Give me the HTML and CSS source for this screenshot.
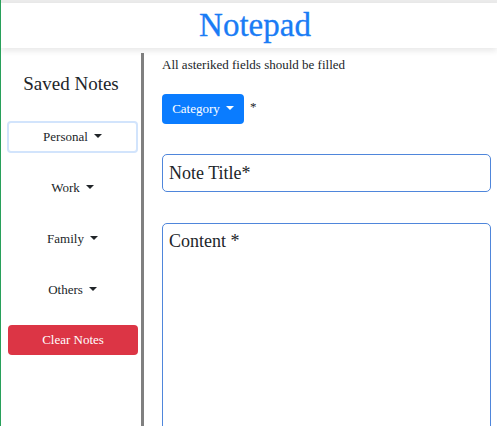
FILE: index.html
```html
<!DOCTYPE html>
<html>
<head>
<meta charset="utf-8">
<link rel="stylesheet" href="styles.css">
</head>
<body>
<div class="page">
  <header class="header"><h1 class="title">Notepad</h1></header>
  <div class="row">
    <aside class="sidebar">
      <h2 class="saved">Saved Notes</h2>
      <div class="cats">
        <button class="side-btn active">Personal<span class="caret"></span></button>
        <button class="side-btn">Work<span class="caret"></span></button>
        <button class="side-btn">Family<span class="caret"></span></button>
        <button class="side-btn">Others<span class="caret"></span></button>
        <button class="clear-btn">Clear Notes</button>
      </div>
    </aside>
    <main class="main">
      <p class="hint">All asteriked fields should be filled</p>
      <div class="cat-row">
        <button class="cat-btn">Category<span class="caret light"></span></button>
        <span class="star">*</span>
      </div>
      <input class="title-input" type="text" placeholder="Note Title*">
      <textarea class="content-input" placeholder="Content *"></textarea>
    </main>
  </div>
</div>
</body>
</html>
```
FILE: styles.css
```css
html, body {
  margin: 0;
  padding: 0;
  background: #fff;
  overflow: hidden;
}
body {
  font-family: "Liberation Serif", "Times New Roman", serif;
  color: #212529;
}
.page {
  border-left: 1px solid #28a05a;
  height: 426px;
  box-sizing: border-box;
  background: #ebebeb;
  padding-top: 3px;
  overflow: hidden;
}
.header {
  position: relative;
  z-index: 2;
  height: 45px;
  background: #fff;
  box-shadow: 0 3px 6px rgba(0,0,0,0.09);
  display: flex;
  align-items: center;
  justify-content: center;
  padding-left: 12px;
}
.title {
  margin: 0;
  font-weight: normal;
  font-size: 33px;
  line-height: 45px;
  color: #1a7cf5;
  -webkit-text-stroke: 0.3px #1a7cf5;
}
.row {
  display: flex;
  background: #fff;
  padding-top: 5px;
  height: 373px;
}
.sidebar {
  width: 140px;
  flex: none;
  border-right: 3px solid #808080;
  box-sizing: content-box;
}
.saved {
  margin: 19px 0 0;
  font-weight: normal;
  font-size: 19px;
  line-height: 23px;
  text-align: center;
}
.cats {
  display: flex;
  flex-direction: column;
  gap: 19px;
  margin-top: 26px;
  padding: 0 3px 0 6px;
}
.side-btn {
  font-family: inherit;
  font-size: 13px;
  color: #212529;
  background: #fff;
  height: 32px;
  border: 2px solid transparent;
  border-radius: 4px;
  cursor: pointer;
  padding: 0;
  flex: none;
}
.side-btn.active {
  border-color: #d2e4fc;
}
.caret {
  display: inline-block;
  width: 0;
  height: 0;
  margin-left: 6px;
  vertical-align: 3px;
  border-top: 4px solid #212529;
  border-left: 4px solid transparent;
  border-right: 4px solid transparent;
}
.caret.light {
  border-top-color: #fff;
}
.clear-btn {
  font-family: inherit;
  font-size: 13px;
  color: #fff;
  background: #dc3545;
  border: none;
  border-radius: 4px;
  height: 30px;
  margin-left: 1px;
  padding: 0;
  flex: none;
}
.main {
  flex: 1;
  padding: 0 6px 0 18px;
  display: flex;
  flex-direction: column;
}
.hint {
  margin: 4px 0 0;
  font-size: 13px;
  line-height: 16px;
  flex: none;
}
.cat-row {
  display: flex;
  align-items: flex-start;
  margin-top: 21px;
  flex: none;
}
.cat-btn {
  font-family: inherit;
  font-size: 13px;
  color: #fff;
  background: #0a7cff;
  border: none;
  border-radius: 4px;
  height: 30px;
  width: 82px;
  padding: 0;
}
.star {
  font-size: 13px;
  margin-left: 6px;
  margin-top: 5px;
}
.title-input {
  margin-top: 30px;
  height: 38px;
  flex: none;
  box-sizing: border-box;
  border: 1px solid #4f86db;
  border-radius: 5px;
  padding: 0 6px;
  font-family: inherit;
  font-size: 18px;
  outline: none;
}
.content-input {
  margin-top: 31px;
  height: 220px;
  flex: none;
  box-sizing: border-box;
  border: 1px solid #4f86db;
  border-radius: 5px;
  padding: 7px 6px;
  font-family: inherit;
  font-size: 18px;
  resize: none;
  outline: none;
}
.title-input::placeholder, .content-input::placeholder {
  color: #212529;
  opacity: 1;
}
```
